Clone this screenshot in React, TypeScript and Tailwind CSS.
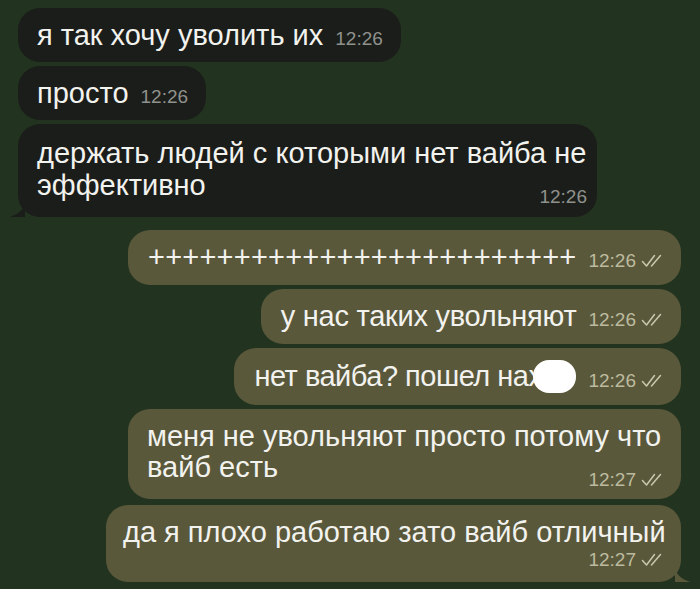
import type { ReactNode } from 'react'

const FONT = { fontFamily: '"Liberation Sans", Arial, sans-serif' }

function Checks() {
  return (
    <svg width="23" height="14" viewBox="0 0 23 14" className="ml-[5px] shrink-0" fill="none">
      <path d="M1.5 7.5 L5.5 12 L13.5 1.5" stroke="#c9c7ad" strokeWidth="1.5" strokeLinecap="round" strokeLinejoin="round" />
      <path d="M10.5 12 L19.5 1.5" stroke="#c9c7ad" strokeWidth="1.5" strokeLinecap="round" />
    </svg>
  )
}

function Time({ t, out }: { t: string; out?: boolean }) {
  return (
    <span
      className={
        out
          ? 'inline-flex shrink-0 items-center text-[19px] leading-[20px] text-[#bdbb9f]'
          : 'inline-flex shrink-0 items-center text-[19px] leading-[20px] text-[#8f918c]'
      }
    >
      {t}
      {out && <Checks />}
    </span>
  )
}

function Inline({ text, t, out }: { text: ReactNode; t: string; out?: boolean }) {
  return (
    <div
      className={
        out
          ? 'flex w-fit items-end rounded-[22px] bg-[#5a583b] pt-[12px] pb-[12px] pl-[20px] pr-[17px]'
          : 'flex w-fit items-end rounded-[22px] bg-[#1b1d1a] pt-[12px] pb-[11px] pl-[19px] pr-[18px]'
      }
    >
      <span className="whitespace-nowrap text-[29px] leading-[31px] text-[#f2f2ee]">{text}</span>
      <span className="ml-[12px] mb-[-1px]">
        <Time t={t} out={out} />
      </span>
    </div>
  )
}

function LeftTail() {
  return (
    <svg width="16" height="14" viewBox="0 0 16 14" className="absolute bottom-0 left-[-9px]">
      <path d="M16 0 C14 8 8 12 0 14 L16 14 Z" fill="#1b1d1a" />
    </svg>
  )
}

function RightTail() {
  return (
    <svg width="16" height="14" viewBox="0 0 16 14" className="absolute bottom-0 right-[-10px]">
      <path d="M0 0 C2 8 8 12 16 14 L0 14 Z" fill="#5a583b" />
    </svg>
  )
}

export default function App() {
  return (
    <div className="min-h-[589px] w-[700px] bg-[#22331f] pt-[8px] pl-[18px] pr-[19px]" style={FONT}>
      <div className="flex flex-col items-start gap-[4px]">
        <Inline text="я так хочу уволить их" t="12:26" />
        <Inline text="просто" t="12:26" />
        <div className="relative flex w-[579px] flex-col rounded-[22px] bg-[#1b1d1a] pt-[13px] pb-[10px] pl-[19px] pr-[10px]">
          <div className="whitespace-nowrap text-[29px] leading-[32px] text-[#f2f2ee]">
            держать людей с которыми нет вайба не
            <br />
            эффективно
          </div>
          <div className="mt-[-14px] flex justify-end">
            <Time t="12:26" />
          </div>
          <LeftTail />
        </div>
      </div>

      <div className="mt-[13px] flex flex-col items-end gap-[4px]">
        <Inline out text={<span className="tracking-[0.2px]">+++++++++++++++++++++++++</span>} t="12:26" />
        <Inline out text={<span className="tracking-[-0.25px]">у нас таких увольняют</span>} t="12:26" />
        <Inline
          out
          t="12:26"
          text={
            <span className="inline-flex items-center">
              <span className="tracking-[-0.5px]">нет вайба? пошел нах</span>
              <span className="ml-[-9px] inline-block h-[33px] w-[43px] rounded-[16px] bg-white" />
            </span>
          }
        />
        <div className="flex w-[553px] flex-col rounded-[22px] bg-[#5a583b] pt-[12px] pb-[9px] pl-[19px] pr-[17px]">
          <div className="whitespace-nowrap text-[29px] leading-[31px] text-[#f2f2ee]">
            меня не увольняют просто потому что
            <br />
            вайб есть
          </div>
          <div className="mt-[-13px] flex justify-end">
            <Time out t="12:27" />
          </div>
        </div>
        <div className="relative mt-[2px] flex w-[575px] flex-col rounded-[22px] bg-[#5a583b] pt-[12px] pb-[12px] pl-[17px] pr-[17px]">
          <div className="whitespace-nowrap text-[29px] leading-[31px] text-[#f2f2ee]">да я плохо работаю зато вайб отличный</div>
          <div className="mt-[2px] flex justify-end">
            <Time out t="12:27" />
          </div>
          <RightTail />
        </div>
      </div>
    </div>
  )
}
